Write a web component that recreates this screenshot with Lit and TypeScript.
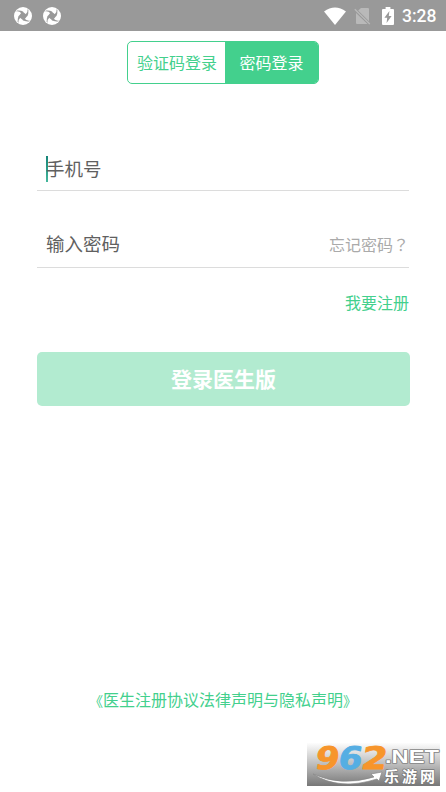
import { LitElement, html, css, svg } from "lit";
import { customElement } from "lit/decorators.js";

const swirl = html`<svg class="swirl" width="18" height="18" viewBox="-9 -9 18 18">
  <circle r="9" fill="#fff" />
  <path d="M-0.6 -4.6L4.6 -0.6L0.6 4.6L-4.6 0.6Z" fill="#999" />
  ${[0, 90, 180, 270].map(
    (a) => svg`<path transform="rotate(${a})" d="M0.6 -4Q-2 -5.8 -6 -5.4L-6.8 -4.6Q-3.6 -5 -1.4 -2.6Z" fill="#999"/>`
  )}
</svg>`;

@customElement("status-bar")
class StatusBar extends LitElement {
  static styles = css`
    :host {
      display: flex;
      align-items: center;
      height: 31px;
      box-sizing: border-box;
      padding: 0 9px 0 14px;
      background: #999;
      color: #fff;
      font: 500 18px/31px Roboto, sans-serif;
    }
    .left { display: flex; gap: 11px; flex: 1; }
    .right { display: flex; align-items: center; }
    svg { display: block; }
    .sim { margin-left: 8px; }
    .battery { margin-left: 11px; }
    .time { margin: 1px 0 0 8px; width: 35px; white-space: nowrap; font-size: 17.5px; }
  `;
  render() {
    return html`
      <div class="left">${swirl}${swirl}</div>
      <div class="right">
        <svg width="22" height="18" viewBox="0 0 22 18"><path d="M0 4.4Q11 -3.6 22 4.4L11 18Z" fill="#fff" /></svg>
        <svg class="sim" width="17" height="18" viewBox="0 0 17 18">
          <path d="M7 1H14Q15 1 15 2V14.2L4.2 3.5ZM2 6L13.5 17H3Q2 17 2 16Z" fill="#b9b9b9" />
          <path d="M0.8 2.2L15.8 17" stroke="#b9b9b9" stroke-width="1.3" />
        </svg>
        <svg class="battery" width="12" height="18" viewBox="0 0 12 18">
          <path d="M1 2H3.6V0H8.4V2H11Q12 2 12 3V17Q12 18 11 18H1Q0 18 0 17V3Q0 2 1 2Z" fill="#fff" />
          <path d="M7.4 4L2.4 10.8H5.2L4.6 16L9.6 9H6.8Z" fill="#999" />
        </svg>
        <span class="time">3:28</span>
      </div>`;
  }
}

@customElement("site-badge")
class SiteBadge extends LitElement {
  static styles = css`
    :host { display: block; width: 133px; height: 43px; background: linear-gradient(#fdfdfd, #bcbcbc 50%, #777); }
    svg { display: block; overflow: visible; }
    text { paint-order: stroke; stroke-linejoin: round; }
    .digits { font: bold 31px "DejaVu Sans", sans-serif; }
    .digits text { stroke-width: 0.8px; }
    .orange { fill: #f7952b; stroke: #f7952b; }
    .blue { fill: #55aee3; stroke: #55aee3; }
    .net { font: bold 18px "Liberation Sans", sans-serif; fill: #fff; stroke: #858585; stroke-width: 1.6px; }
    .name { font: bold 15px/15px "Noto Sans CJK SC", sans-serif; fill: #fff; stroke: #777; stroke-width: 1.4px; }
  `;
  render() {
    return html`<svg width="133" height="43" viewBox="0 0 133 43">
      <path d="M6 31Q34 44 67 34L64 31L75 29L72 38L70 36Q32 48 6 31Z" fill="#fff" stroke="#888" stroke-width="0.7" />
      <g class="digits" transform="translate(7 26) skewX(-9)">
        <text class="orange" x="0" y="0" textLength="24" lengthAdjust="spacingAndGlyphs">9</text>
        <text class="blue" x="23" y="0" textLength="24" lengthAdjust="spacingAndGlyphs">6</text>
        <text class="orange" x="46" y="0" textLength="26" lengthAdjust="spacingAndGlyphs">2</text>
      </g>
      <text class="net" x="78" y="20" textLength="54" lengthAdjust="spacingAndGlyphs">.NET</text>
      <text class="name" x="77" y="39" textLength="51">乐游网</text>
    </svg>`;
  }
}

@customElement("app-root")
class AppRoot extends LitElement {
  static styles = css`
    :host {
      display: flex;
      flex-direction: column;
      position: relative;
      height: 792px;
      background: #fff;
      color: #43d08d;
      font: 16px/24px "Noto Sans CJK SC", sans-serif;
      overflow: hidden;
    }
    .tabs {
      display: flex;
      align-self: center;
      width: 192px;
      height: 43px;
      margin-top: 10px;
      box-sizing: border-box;
      border: 1px solid #43d08d;
      border-radius: 5px;
      line-height: 40px;
      text-align: center;
      overflow: hidden;
    }
    .tab { width: 97px; padding-left: 1px; box-sizing: border-box; }
    .active { flex: 1; background: #43d08d; color: #fff; padding: 0; }
    .form { display: flex; flex-direction: column; margin: 64px 36px 0 37px; }
    .field {
      display: flex;
      align-items: center;
      justify-content: space-between;
      height: 43px;
      width: 372px;
      box-sizing: border-box;
      padding: 0 0 2px 9px;
      border-bottom: 1px solid #dcdcdc;
      color: #606060;
      font-size: 18.5px;
    }
    .password { height: 77px; padding-top: 30px; }
    .caret { width: 2px; height: 26px; margin: 2px -2px 0 0; background: linear-gradient(#168478, #45b79c); }
    .first { justify-content: flex-start; }
    .forgot { font-size: 16px; color: #aaa; padding-top: 2px; }
    .mark { font-family: "Noto Sans CJK TC", sans-serif; }
    .register { align-self: flex-end; margin: 22px 1px 0 0; }
    .submit {
      height: 54px;
      margin-top: 38px;
      border: 0;
      border-radius: 5px;
      background: #b2ebd0;
      color: #fff;
      font: bold 21px/52px "Noto Sans CJK SC", sans-serif;
      padding: 0 0 2px;
    }
    .agreement { align-self: center; margin-top: 281px; white-space: nowrap; }
    .bracket { font-size: 14px; }
    site-badge { position: absolute; right: 6px; bottom: 6px; }
  `;
  render() {
    return html`
      <status-bar></status-bar>
      <div class="tabs">
        <div class="tab">验证码登录</div>
        <div class="tab active">密码登录</div>
      </div>
      <div class="form">
        <div class="field first"><i class="caret"></i><span>手机号</span></div>
        <div class="field password"><span>输入密码</span><span class="forgot">忘记密码<span class="mark" lang="zh-TW">？</span></span></div>
        <span class="register">我要注册</span>
        <button class="submit">登录医生版</button>
      </div>
      <span class="agreement"><span class="bracket">《</span>医生注册协议法律声明与隐私声明<span class="bracket">》</span></span>
      <site-badge></site-badge>`;
  }
}
